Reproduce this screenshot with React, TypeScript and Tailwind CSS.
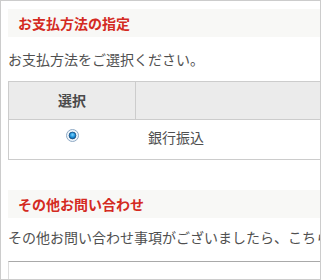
import React from "react";

function Radio() {
  return (
    <svg width="13" height="13" viewBox="0 0 13 13" aria-hidden>
      <defs>
        <radialGradient id="rg" cx="50%" cy="40%" r="60%">
          <stop offset="0%" stopColor="#7fd4ff" />
          <stop offset="60%" stopColor="#1a8fd8" />
          <stop offset="100%" stopColor="#0b5a9a" />
        </radialGradient>
      </defs>
      <circle cx="6.5" cy="6.5" r="6" fill="#eef5fb" stroke="#8fa9c4" strokeWidth="1" />
      <circle cx="6.5" cy="6.5" r="3.4" fill="url(#rg)" stroke="#1c4f80" strokeWidth="0.8" />
    </svg>
  );
}

export default function App() {
  const font = { fontFamily: '"Noto Sans CJK JP", "Noto Sans", sans-serif' };
  return (
    <div
      className="w-[321px] h-[280px] border border-[#cccccc] overflow-hidden bg-white"
      style={font}
    >
      <div className="w-[420px] pl-[7px] pt-[8px] text-[14px] text-[#505050]">
        <div className="h-[28px] bg-[#f8f8f6] pl-[10px] flex items-center font-bold text-[#d42a22] leading-none">
          お支払方法の指定
        </div>
        <p className="mt-[12px] leading-[20px] whitespace-nowrap">お支払方法をご選択ください。</p>
        <div className="mt-[12px] w-[400px] border border-[#cccccc]">
          <div className="flex h-[38px] bg-[#ebebeb] border-b border-[#cccccc]">
            <div className="w-[127px] border-r border-[#cccccc] flex items-center justify-center font-bold text-[#4a4a4a]">
              選択
            </div>
            <div className="flex-1" />
          </div>
          <div className="flex h-[39px]">
            <div className="w-[127px] flex justify-center pt-[9px]">
              <Radio />
            </div>
            <div className="flex-1 pl-[12px] pt-[7px] leading-[20px]">銀行振込</div>
          </div>
        </div>
        <div className="mt-[30px] h-[28px] bg-[#f8f8f6] pl-[10px] flex items-center font-bold text-[#d42a22] leading-none">
          その他お問い合わせ
        </div>
        <p className="mt-[9px] leading-[20px] whitespace-nowrap">
          その他お問い合わせ事項がございましたら、こちらにご入力ください。
        </p>
        <div className="mt-[14px] w-[400px] h-[60px] border border-[#dddddd] border-t-[#a9a9a9]" />
      </div>
    </div>
  );
}
